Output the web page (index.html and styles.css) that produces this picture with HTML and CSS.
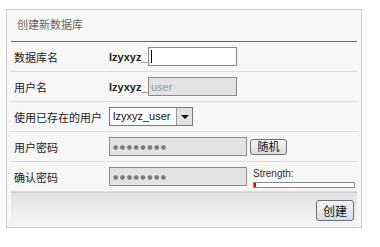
FILE: index.html
```html
<html lang="zh-CN">
<head>
  <meta charset="UTF-8">
  <title>创建新数据库</title>
  <link rel="stylesheet" href="styles.css">
</head>
<body>
  <div class="panel">
    <h2 class="title">创建新数据库</h2>

    <form class="db-form">
      <div class="row">
        <div class="label">数据库名</div>
        <div class="value">
          <span class="prefix">lzyxyz_</span>
          <div class="field caret-field"><span class="caret"></span></div>
        </div>
      </div>

      <div class="row">
        <div class="label">用户名</div>
        <div class="value">
          <span class="prefix">lzyxyz_</span>
          <input type="text" class="field disabled" placeholder="user" disabled>
        </div>
      </div>

      <div class="row">
        <div class="label">使用已存在的用户</div>
        <div class="value">
          <div class="select">
            <span class="select-text">lzyxyz_user</span>
            <span class="select-arrow"><span class="tri"></span></span>
          </div>
        </div>
      </div>

      <div class="row">
        <div class="label">用户密码</div>
        <div class="value">
          <div class="field pass disabled">●●●●●●●●</div>
          <button type="button" class="btn small">随机</button>
        </div>
      </div>

      <div class="row">
        <div class="label">确认密码</div>
        <div class="value">
          <div class="field pass disabled">●●●●●●●●</div>
          <div class="strength">
            <div class="strength-label">Strength:</div>
            <div class="strength-bar"><div class="strength-fill" style="width: 2px"></div></div>
          </div>
        </div>
      </div>

      <div class="footer">
        <button type="submit" class="btn">创建</button>
      </div>
    </form>
  </div>
</body>
</html>
```

FILE: styles.css
```css
body{
  margin: 0;
  background: #fff;
}
body, button, input{
  font-family: "Liberation Sans", "Noto Sans CJK SC", sans-serif;
}
.panel{
  width: 356px;
  height: 219px;
  margin: 9px 0 0 6px;
  box-sizing: border-box;
  background: #f7f7f7;
  border: 1px solid #cbcbcb;
  padding: 0 4px;
}
.title{
  margin: 0;
  height: 31px;
  line-height: 31px;
  padding-left: 6px;
  font-size: 11px;
  font-weight: normal;
  color: #666;
  border-bottom: 1px solid #b9471a;
}
.row{
  display: grid;
  grid-template-columns: 94px 251px;
  column-gap: 1px;
}
.label, .value{
  height: 29px;
  border-bottom: 1px solid #dcdcdc;
  display: flex;
  align-items: center;
  padding-left: 3px;
  font-size: 11px;
  color: #222;
}
.prefix{
  font-weight: bold;
  font-size: 11px;
  color: #222;
  width: 39px;
}
.field{
  width: 89px;
  height: 19px;
  box-sizing: border-box;
  border: 1px solid #8a8a8a;
  background: #fff;
  padding: 0 2px;
  font-size: 11px;
  outline: none;
}
.caret-field{
  display: flex;
  align-items: center;
}
.caret{
  width: 1px;
  height: 13px;
  background: #000;
}
.field.disabled{
  background: #e3e3e3;
  color: #999;
}
.field::placeholder{
  color: #999;
}
.field.pass{
  width: 138px;
  color: #7a7a7a;
  font-family: "DejaVu Sans", sans-serif;
  font-size: 6px;
  line-height: 17px;
  letter-spacing: 1.6px;
  padding-left: 3px;
}
.select{
  display: flex;
  width: 84px;
  height: 19px;
  box-sizing: border-box;
  border: 1px solid #7a7a7a;
  background: #fff;
}
.select-text{
  flex: 1;
  font-size: 11px;
  line-height: 17px;
  padding-left: 3px;
  color: #111;
}
.select-arrow{
  width: 15px;
  background: #e2e2e2;
  border-left: 1px solid #9a9a9a;
  display: flex;
  align-items: center;
  justify-content: center;
}
.tri{
  width: 0;
  height: 0;
  border-left: 4px solid transparent;
  border-right: 4px solid transparent;
  border-top: 4px solid #111;
}
.btn{
  height: 21px;
  padding: 0 6px;
  font-size: 12px;
  color: #111;
  border: 1px solid #707070;
  border-radius: 3px;
  background: linear-gradient(#f4f4f4, #e6e9ed 50%, #d6dde5);
  cursor: pointer;
}
.btn.small{
  height: 16px;
  width: 37px;
  margin-left: 3px;
  padding: 0;
  font-size: 11px;
  line-height: 14px;
}
.strength{
  margin-left: 6px;
  padding-top: 3px;
}
.strength-label{
  font-size: 10px;
  color: #333;
  line-height: 10px;
  margin-bottom: 3px;
}
.strength-bar{
  width: 102px;
  height: 6px;
  box-sizing: border-box;
  border: 1px solid #8a8a8a;
  background: #fff;
}
.strength-fill{
  height: 100%;
  background: #e00;
}
.footer{
  height: 34px;
  border-top: 1px solid #d0d0d0;
  background: linear-gradient(#e2e2e2, #f6f6f6);
  display: flex;
  justify-content: flex-end;
  align-items: center;
  padding-right: 3px;
}
```
